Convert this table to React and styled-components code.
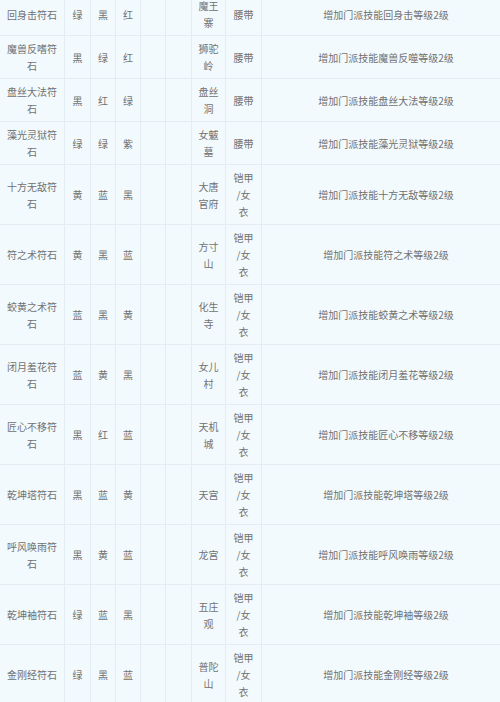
import React from "react";
import styled, { createGlobalStyle } from "styled-components";

const Global = createGlobalStyle`
  html, body { margin: 0; padding: 0; background: #f3fafd; overflow: hidden; }
  body { font-family: "Noto Sans CJK SC", "Noto Sans", sans-serif; }
`;

const Wrap = styled.div`
  width: 500px;
  height: 702px;
  overflow: hidden;
  background: #f3fafd;
`;

const Table = styled.table`
  width: 511px;
  margin-top: -8px;
  margin-left: -1px;
  border-collapse: collapse;
  table-layout: fixed;
  background: #f3fafd;
`;

const Cell = styled.td`
  border: 1px solid #e2eef4;
  padding: 4px ${(p) => p.$pad ?? 6}px;
  font-size: 10px;
  line-height: 17px;
  color: #717171;
  text-align: center;
  vertical-align: middle;
  word-break: break-all;
  line-break: anywhere;
`;

const widths = [65, 26, 25, 25, 25, 26, 34, 36, 249];

const rows = [
  ["回身击符石", "绿", "黑", "红", "魔王寨", "腰带", "回身击"],
  ["魔兽反嗜符石", "黑", "绿", "红", "狮驼岭", "腰带", "魔兽反噬"],
  ["盘丝大法符石", "黑", "红", "绿", "盘丝洞", "腰带", "盘丝大法"],
  ["藻光灵狱符石", "绿", "绿", "紫", "女魃墓", "腰带", "藻光灵狱"],
  ["十方无敌符石", "黄", "蓝", "黑", "大唐官府", "铠甲/女衣", "十方无敌"],
  ["符之术符石", "黄", "黑", "蓝", "方寸山", "铠甲/女衣", "符之术"],
  ["蛟黄之术符石", "蓝", "黑", "黄", "化生寺", "铠甲/女衣", "蛟黄之术"],
  ["闭月羞花符石", "蓝", "黄", "黑", "女儿村", "铠甲/女衣", "闭月羞花"],
  ["匠心不移符石", "黑", "红", "蓝", "天机城", "铠甲/女衣", "匠心不移"],
  ["乾坤塔符石", "黑", "蓝", "黄", "天宫", "铠甲/女衣", "乾坤塔"],
  ["呼风唤雨符石", "黑", "黄", "蓝", "龙宫", "铠甲/女衣", "呼风唤雨"],
  ["乾坤袖符石", "绿", "蓝", "黑", "五庄观", "铠甲/女衣", "乾坤袖"],
  ["金刚经符石", "绿", "黑", "蓝", "普陀山", "铠甲/女衣", "金刚经"],
];

export default function App() {
  return (
    <Wrap>
      <Global />
      <Table>
        <colgroup>
          {widths.map((w, i) => (
            <col key={i} style={{ width: w }} />
          ))}
        </colgroup>
        <tbody>
          {rows.map((r) => (
            <tr key={r[0]}>
              <Cell $pad={6}>{r[0]}</Cell>
              <Cell $pad={2}>{r[1]}</Cell>
              <Cell $pad={2}>{r[2]}</Cell>
              <Cell $pad={2}>{r[3]}</Cell>
              <Cell />
              <Cell />
              <Cell $pad={6}>{r[4]}</Cell>
              <Cell $pad={6.5}>{r[5]}</Cell>
              <Cell>{`增加门派技能${r[6]}等级2级`}</Cell>
            </tr>
          ))}
        </tbody>
      </Table>
    </Wrap>
  );
}
